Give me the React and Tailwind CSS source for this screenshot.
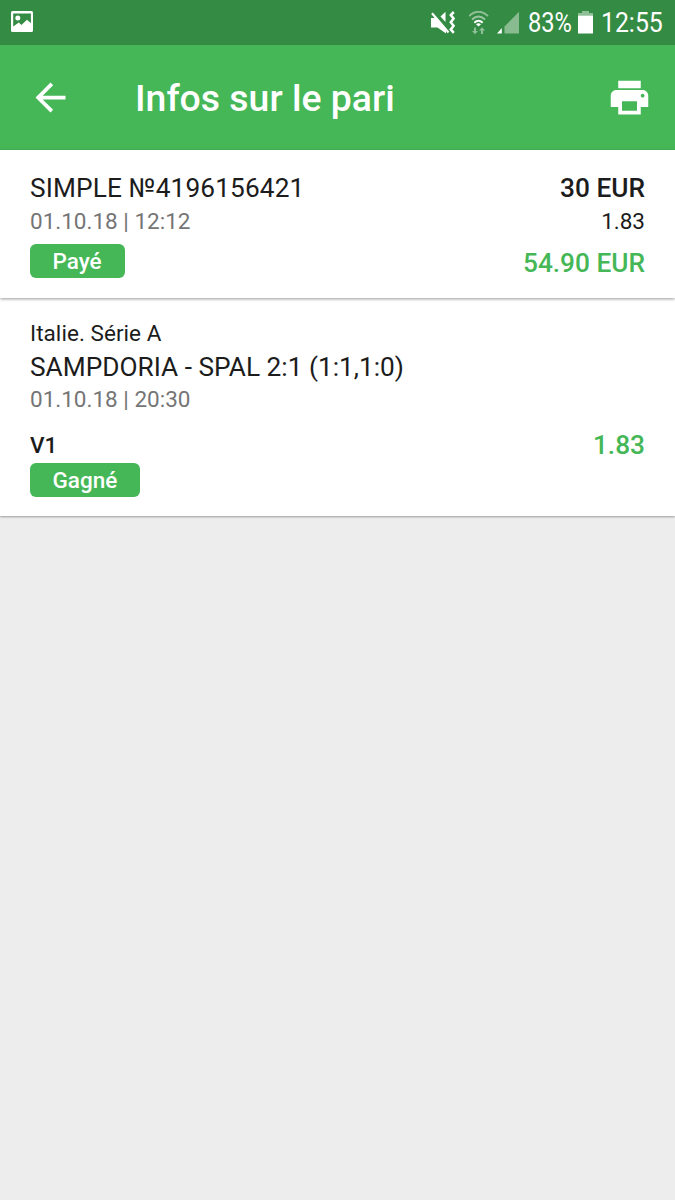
import React from 'react';

const StatusBar = () => (
  <div className="flex h-[45px] items-center bg-[#348b43] text-white">
    <svg className="ml-[11px] h-[21px] w-[22px] -translate-y-px" viewBox="0 0 22 21">
      <path
        fill="currentColor"
        fillRule="evenodd"
        d="M1.5 0h19A1.5 1.5 0 0 1 22 1.5v18a1.5 1.5 0 0 1-1.5 1.5h-19A1.5 1.5 0 0 1 0 19.5v-18A1.5 1.5 0 0 1 1.500 0zM2.200 2.500v12.900L7.800 11.500l2.600 2.400L16 8.800l3.900 3.400V2.500z"
      />
      <circle cx="6.800" cy="7" r="2.500" fill="currentColor" />
    </svg>
    <div className="ml-auto flex items-center">
      {/* muted, vibration on */}
      <svg className="h-[24px] w-[26px]" viewBox="0 0 26 24" fill="currentColor">
        <path d="M0 7h4.500L15 18.500V22.500L6.500 16.500H0z" />
        <path d="M9.500 5.500L14.500 .800V11z" />
        <path d="M1 2.200L17.500 21.500" stroke="currentColor" strokeWidth="2.200" fill="none" />
        <path d="M22.800 1l-3 3 2.800 3.600-2.800 3.600 2.800 3.600-2.800 3.600 3 3.400" stroke="currentColor" strokeWidth="2.500" fill="none" />
      </svg>
      <svg className="ml-[12px] h-[24px] w-[20px]" viewBox="0 0 20 24" fill="none">
        <g stroke="#fff" strokeWidth="2">
          <path d="M0 5Q9.500-3.500 19 5" opacity=".45" />
          <path d="M3 8.500Q9.500 2.500 16 8.500" opacity=".5" />
          <path d="M5.300 11.800Q9.500 7.800 13.700 11.800" />
        </g>
        <path d="M7 13.200Q9.500 11.200 12 13.200L9.500 15.500z" fill="#fff" />
        <path d="M5 16.500h2v3.500h2l-3 3.200-3-3.200h2zM12 23h2v-3.500h2l-3-3.200-3 3.200h2z" fill="#fff" opacity=".45" />
      </svg>
      <svg className="ml-[8px] h-[24px] w-[24px]" viewBox="0 0 24 24" fill="#fff">
        <path d="M0 22.500L4.800 17v5.500z" />
        <path d="M7.500 22.500V15.500L22 .800v21.700z" opacity=".42" />
      </svg>
      <span className="ml-[7px] inline-block w-[45px] origin-left scale-x-[0.83] text-[28.5px] leading-[45px] whitespace-nowrap">83%</span>
      <svg className="ml-[5px] h-[24px] w-[15px]" viewBox="0 0 15 24" fill="#fff">
        <path d="M4 0h7v2h4v2.500H0V2h4z" opacity=".45" />
        <path d="M0 4.500h15v18H0z" />
      </svg>
      <span className="mr-[13px] ml-[8px] inline-block w-[61px] origin-left scale-x-[0.87] text-[28.5px] leading-[45px] whitespace-nowrap">12:55</span>
    </div>
  </div>
);

const Toolbar = () => (
  <header className="flex h-[105px] items-center bg-[#45b757] text-white">
    <svg className="mb-px ml-[28px] size-[45px] shrink-0" viewBox="0 0 24 24" fill="currentColor">
      <path d="M20 11H7.830l5.590-5.590L12 4l-8 8 8 8 1.410-1.410L7.830 13H20v-2z" />
    </svg>
    <h1 className="ml-[62px] text-[37.4px] leading-[44px] font-medium">Infos sur le pari</h1>
    <svg className="mr-[23px] mb-px ml-auto size-[45px] shrink-0" viewBox="0 0 24 24" fill="currentColor">
      <path d="M19 8H5c-1.660 0-3 1.340-3 3v6h4v4h12v-4h4v-6c0-1.660-1.340-3-3-3zm-3 11H8v-5h8v5zm3-7c-.550 0-1-.450-1-1s.450-1 1-1 1 .450 1 1-.450 1-1 1zm-1-9H6v4h12V3z" />
    </svg>
  </header>
);

const Badge = ({ children }) => (
  <span className="block h-[34px] w-fit min-w-[95px] rounded-[6px] bg-[#45b757] px-[22.5px] text-[22.5px] leading-[34px] font-medium text-white">
    {children}
  </span>
);

const BetSummary = ({ bet }) => (
  <section className="relative flex h-[148px] justify-between bg-white px-[30px] pt-[22px] text-[26.25px] leading-[32px] shadow-[0_1px_3px_rgba(0,0,0,0.4)]">
    <div>
      <p className="tracking-[0.12px]">{bet.type} №{bet.number}</p>
      <p className="mt-px mb-[7px] text-[22.5px] leading-[32px] text-[#757575]">{bet.date}</p>
      <Badge>{bet.status}</Badge>
    </div>
    <div className="text-right">
      <p className="font-medium">{bet.stake}</p>
      <p className="mt-px text-[22.5px] leading-[32px]">{bet.odds}</p>
      <p className="mt-[10px] font-medium text-[#45b757]">{bet.payout}</p>
    </div>
  </section>
);

const EventCard = ({ event }) => (
  <section className="h-[218px] bg-white px-[30px] pt-[19px] text-[22.5px] leading-[32px] shadow-[0_1px_2px_rgba(0,0,0,0.35)]">
    <p className="tracking-[0.05px]">{event.league}</p>
    <p className="mt-px text-[26.25px] leading-[34px]">{event.match}</p>
    <p className="-mt-px text-[#757575]">{event.date}</p>
    <div className="mt-[14px] flex justify-between">
      <div>
        <p className="mb-[2px] font-medium">{event.pick}</p>
        <Badge>{event.status}</Badge>
      </div>
      <p className="text-[26.25px] leading-[32px] font-medium text-[#45b757]">{event.odds}</p>
    </div>
  </section>
);

const bet = {
  type: 'SIMPLE',
  number: '4196156421',
  date: '01.10.18 | 12:12',
  status: 'Payé',
  stake: '30 EUR',
  odds: '1.83',
  payout: '54.90 EUR',
};

const event = {
  league: 'Italie. Série A',
  match: 'SAMPDORIA - SPAL 2:1 (1:1,1:0)',
  date: '01.10.18 | 20:30',
  pick: 'V1',
  status: 'Gagné',
  odds: '1.83',
};

const App = () => (
  <div className="min-h-screen overflow-hidden bg-[#ededed] font-[Roboto,sans-serif] text-[#1c1c1c]">
    <StatusBar />
    <Toolbar />
    <BetSummary bet={bet} />
    <EventCard event={event} />
  </div>
);

export default App;
